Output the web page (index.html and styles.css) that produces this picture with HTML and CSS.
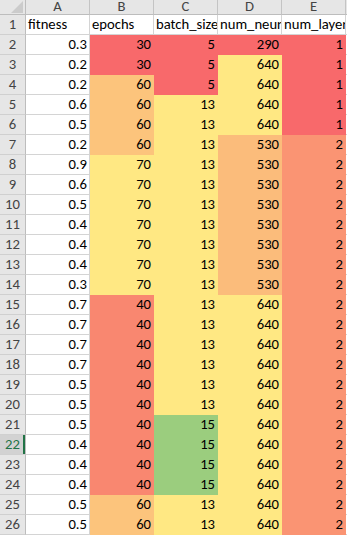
FILE: index.html
```html
<!DOCTYPE html>
<html>
<head>
<meta charset="utf-8">
<link rel="stylesheet" href="styles.css">
</head>
<body>
<div class="sheet">
  <div class="corner"><svg width="25" height="14" viewBox="0 0 25 14"><polygon points="11,13 23,13 23,1" fill="#cbcbcb"/></svg></div>
  <div class="ch">A</div><div class="ch">B</div><div class="ch">C</div><div class="ch">D</div><div class="ch">E</div><div class="ch"></div>

  <div class="rh">1</div><div class="c t">fitness</div><div class="c t">epochs</div><div class="c t">batch_size</div><div class="c t">num_neurons</div><div class="c t">num_layers</div><div class="c"></div>

  <div class="rh">2</div><div class="c">0.3</div><div class="c r">30</div><div class="c r">5</div><div class="c r">290</div><div class="c r">1</div><div class="c"></div>
  <div class="rh">3</div><div class="c">0.2</div><div class="c r">30</div><div class="c r">5</div><div class="c y">640</div><div class="c r">1</div><div class="c"></div>
  <div class="rh">4</div><div class="c">0.2</div><div class="c o">60</div><div class="c r">5</div><div class="c y">640</div><div class="c r">1</div><div class="c"></div>
  <div class="rh">5</div><div class="c">0.6</div><div class="c o">60</div><div class="c y">13</div><div class="c y">640</div><div class="c r">1</div><div class="c"></div>
  <div class="rh">6</div><div class="c">0.5</div><div class="c o">60</div><div class="c y">13</div><div class="c y">640</div><div class="c r">1</div><div class="c"></div>
  <div class="rh">7</div><div class="c">0.2</div><div class="c o">60</div><div class="c y">13</div><div class="c d">530</div><div class="c p">2</div><div class="c"></div>
  <div class="rh">8</div><div class="c">0.9</div><div class="c y">70</div><div class="c y">13</div><div class="c d">530</div><div class="c p">2</div><div class="c"></div>
  <div class="rh">9</div><div class="c">0.6</div><div class="c y">70</div><div class="c y">13</div><div class="c d">530</div><div class="c p">2</div><div class="c"></div>
  <div class="rh">10</div><div class="c">0.5</div><div class="c y">70</div><div class="c y">13</div><div class="c d">530</div><div class="c p">2</div><div class="c"></div>
  <div class="rh">11</div><div class="c">0.4</div><div class="c y">70</div><div class="c y">13</div><div class="c d">530</div><div class="c p">2</div><div class="c"></div>
  <div class="rh">12</div><div class="c">0.4</div><div class="c y">70</div><div class="c y">13</div><div class="c d">530</div><div class="c p">2</div><div class="c"></div>
  <div class="rh">13</div><div class="c">0.4</div><div class="c y">70</div><div class="c y">13</div><div class="c d">530</div><div class="c p">2</div><div class="c"></div>
  <div class="rh">14</div><div class="c">0.3</div><div class="c y">70</div><div class="c y">13</div><div class="c d">530</div><div class="c p">2</div><div class="c"></div>
  <div class="rh">15</div><div class="c">0.7</div><div class="c s">40</div><div class="c y">13</div><div class="c y">640</div><div class="c p">2</div><div class="c"></div>
  <div class="rh">16</div><div class="c">0.7</div><div class="c s">40</div><div class="c y">13</div><div class="c y">640</div><div class="c p">2</div><div class="c"></div>
  <div class="rh">17</div><div class="c">0.7</div><div class="c s">40</div><div class="c y">13</div><div class="c y">640</div><div class="c p">2</div><div class="c"></div>
  <div class="rh">18</div><div class="c">0.7</div><div class="c s">40</div><div class="c y">13</div><div class="c y">640</div><div class="c p">2</div><div class="c"></div>
  <div class="rh">19</div><div class="c">0.5</div><div class="c s">40</div><div class="c y">13</div><div class="c y">640</div><div class="c p">2</div><div class="c"></div>
  <div class="rh">20</div><div class="c">0.5</div><div class="c s">40</div><div class="c y">13</div><div class="c y">640</div><div class="c p">2</div><div class="c"></div>
  <div class="rh">21</div><div class="c">0.5</div><div class="c s">40</div><div class="c g">15</div><div class="c y">640</div><div class="c p">2</div><div class="c"></div>
  <div class="rh sel">22</div><div class="c">0.4</div><div class="c s">40</div><div class="c g">15</div><div class="c y">640</div><div class="c p">2</div><div class="c"></div>
  <div class="rh">23</div><div class="c">0.4</div><div class="c s">40</div><div class="c g">15</div><div class="c y">640</div><div class="c p">2</div><div class="c"></div>
  <div class="rh">24</div><div class="c">0.4</div><div class="c s">40</div><div class="c g">15</div><div class="c y">640</div><div class="c p">2</div><div class="c"></div>
  <div class="rh">25</div><div class="c">0.5</div><div class="c o">60</div><div class="c y">13</div><div class="c y">640</div><div class="c p">2</div><div class="c"></div>
  <div class="rh">26</div><div class="c">0.5</div><div class="c o">60</div><div class="c y">13</div><div class="c y">640</div><div class="c p">2</div><div class="c"></div>
</div>
</body>
</html>
```

FILE: styles.css
```css
html, body {
  margin: 0;
  padding: 0;
  background: #ffffff;
  overflow: hidden;
}

.sheet {
  display: grid;
  grid-template-columns: 26px repeat(5, 64px) 1fr;
  grid-template-rows: 15px;
  grid-auto-rows: 20px;
  font-family: "Carlito", "Liberation Sans", Arial, sans-serif;
  font-size: 14.67px;
  color: #000000;
}

.sheet > div {
  box-sizing: border-box;
  overflow: hidden;
  white-space: nowrap;
}

.corner {
  background: #e6e6e6;
  border-right: 1px solid #bdbdbd;
  border-bottom: 1px solid #bdbdbd;
}

.corner svg {
  display: block;
}

.ch {
  background: #e6e6e6;
  border-right: 1px solid #c4c4c4;
  border-bottom: 1px solid #bdbdbd;
  text-align: center;
  line-height: 12px;
  color: #444444;
}

.rh {
  background: #e6e6e6;
  border-right: 1px solid #bdbdbd;
  border-bottom: 1px solid #d0d0d0;
  text-align: center;
  line-height: 19px;
  color: #444444;
}

.rh.sel {
  background: #d2d2d2;
  color: #217346;
  box-shadow: inset -2px 0 0 #217346;
}

.c {
  border-right: 1px solid #d4d4d4;
  border-bottom: 1px solid #d4d4d4;
  line-height: 19px;
  text-align: right;
  padding: 0 2px;
}

.c.t {
  text-align: left;
}

.r { background: #f8696b; border-color: #f8696b; }
.o { background: #fcc47c; border-color: #fcc47c; }
.y { background: #ffe883; border-color: #ffe883; }
.s { background: #f98770; border-color: #f98770; }
.p { background: #fa9473; border-color: #fa9473; }
.g { background: #9bcd7e; border-color: #9bcd7e; }
.d { background: #fbbc7b; border-color: #fbbc7b; }
```
